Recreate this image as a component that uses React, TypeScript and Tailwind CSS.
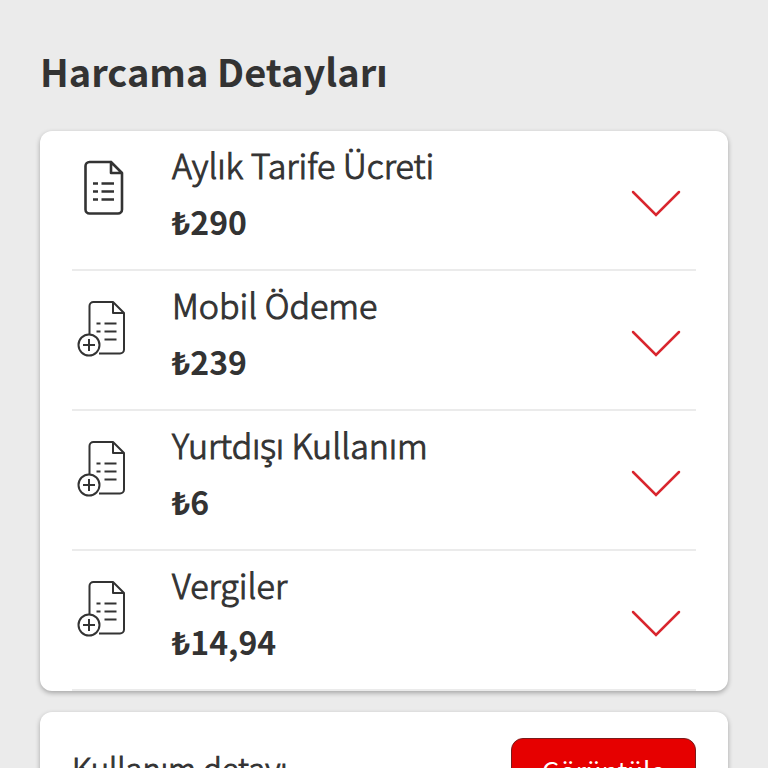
type Expense = {
  label: string;
  amount: string;
  extra?: boolean;
};

const expenses: Expense[] = [
  { label: "Aylık Tarife Ücreti", amount: "₺290" },
  { label: "Mobil Ödeme", amount: "₺239", extra: true },
  { label: "Yurtdışı Kullanım", amount: "₺6", extra: true },
  { label: "Vergiler", amount: "₺14,94", extra: true },
];

function BillIcon() {
  return (
    <svg viewBox="0 0 64 64" className="h-16 w-16" fill="none" stroke="#333333" strokeWidth="2.6" aria-hidden="true">
      <path d="M39 7H17.5a4 4 0 0 0-4 4v43.5a4 4 0 0 0 4 4H46a4 4 0 0 0 4-4V18L39 7v11h11" strokeLinejoin="round" />
      <path d="M21 28.5h5M21 36.5h5M21 44.5h5M29.5 28.5H42M29.5 36.5H42M29.5 44.5H42" />
    </svg>
  );
}

function BillPlusIcon() {
  return (
    <svg viewBox="0 0 64 64" className="h-16 w-16" fill="none" stroke="#333333" strokeWidth="2" aria-hidden="true">
      <path d="M17.5 39V11a4 4 0 0 1 4-4H41l11 11v36.5a4 4 0 0 1-4 4H27M41 7v11h11" strokeLinejoin="round" />
      <path d="M24.5 28.5h4M24.500 36.5h4M32.5 28.5h12M32.5 36.5h12M32.5 44.5h12" />
      <circle cx="17" cy="50" r="10.5" />
      <path d="M17 44v12M11 50h12" />
    </svg>
  );
}

function Chevron() {
  return (
    <svg viewBox="0 0 50 28" className="h-7 w-[50px]" fill="none" stroke="#d9262e" strokeWidth="2.5" aria-hidden="true">
      <path d="M2 2l23 23L48 2" strokeLinecap="round" />
    </svg>
  );
}

function ExpenseRow({ label, amount, extra }: Expense) {
  return (
    <li className="border-b-2 border-[#ebebeb]">
      <button type="button" aria-expanded="false" className="flex w-full items-start pt-[6px] pb-5 text-left">
        <span className="mt-[18px] mr-9">{extra ? <BillPlusIcon /> : <BillIcon />}</span>
        <span className="flex-1">
          <span className="block text-[34px] leading-[56px] font-light [-webkit-text-stroke:1px]">{label}</span>
          <span className="block text-[32px] leading-[56px] font-bold">{amount}</span>
        </span>
        <span className="mt-[53px] mr-[15px]">
          <Chevron />
        </span>
      </button>
    </li>
  );
}

export default function App() {
  return (
    <main className="h-screen overflow-hidden bg-[#ebebeb] px-10 pt-[41px] font-['Noto_Sans_CJK_SC','Noto_Sans',sans-serif] text-[#333333]">
      <h1 className="text-[38px] leading-[60px] font-bold">Harcama Detayları</h1>

      <ul className="mt-[30px] rounded-xl bg-white px-8 shadow-[0_2px_5px_rgba(0,0,0,0.3)]">
        {expenses.map((expense) => (
          <ExpenseRow key={expense.label} {...expense} />
        ))}
      </ul>

      <section className="mt-[21px] flex items-start justify-between rounded-xl bg-white px-8 pt-[26px] pb-8 shadow-[0_2px_5px_rgba(0,0,0,0.3)]">
        <h2 className="text-[31px] leading-[60px] font-light [-webkit-text-stroke:1px]">Kullanım detayı</h2>
        <button
          type="button"
          className="h-[62px] w-[185px] rounded-xl border border-[#7a1c1c] bg-[#e60000] text-[26px] font-normal text-white"
        >
          Görüntüle
        </button>
      </section>
    </main>
  );
}
